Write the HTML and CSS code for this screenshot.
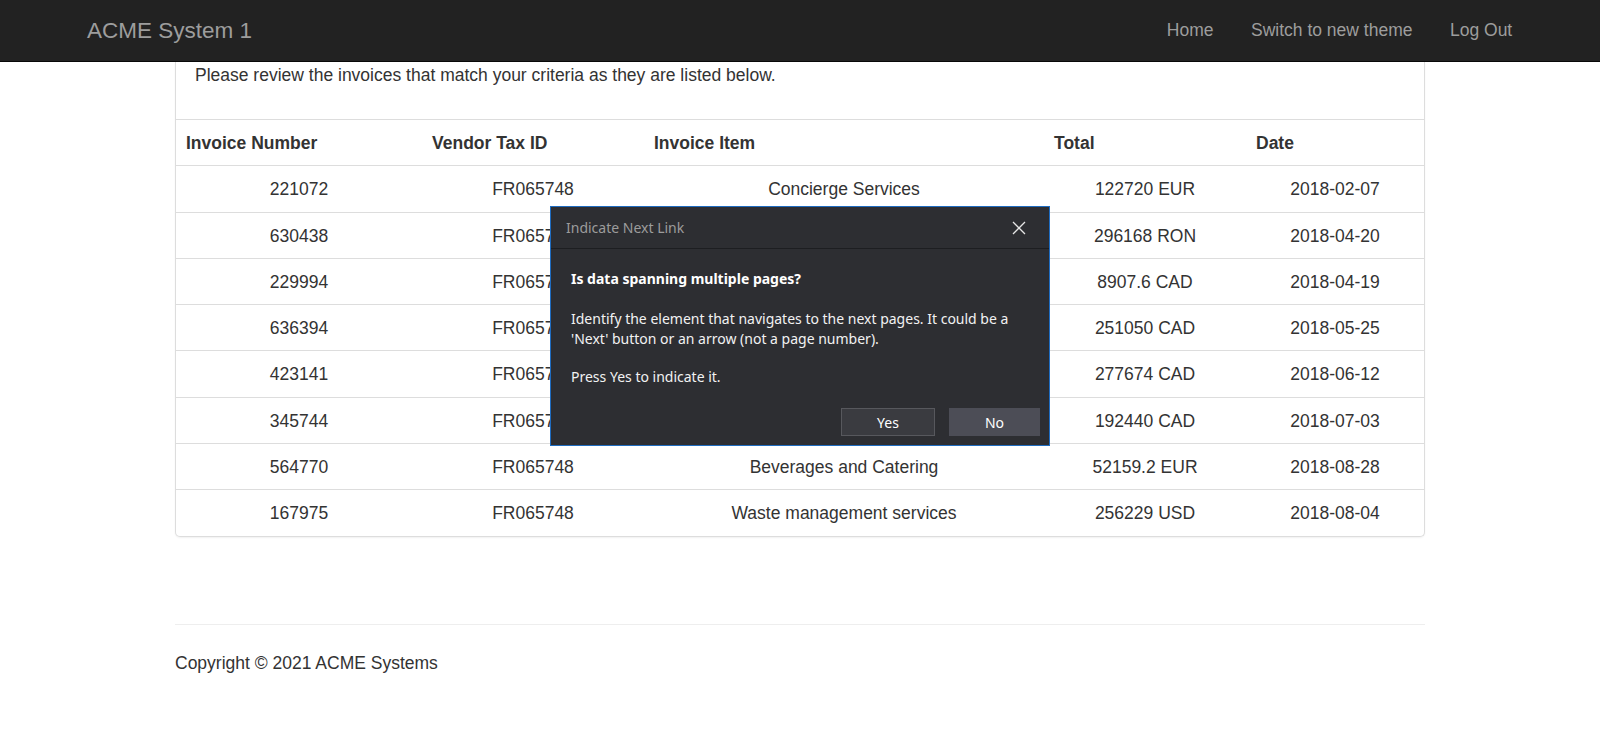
FILE: index.html
```html
<!DOCTYPE html>
<html lang="en">
<head>
<meta charset="utf-8">
<title>ACME System 1</title>
<link rel="stylesheet" href="styles.css">
</head>
<body>
<nav class="navbar">
  <div class="navbar-inner">
    <a class="brand" href="#">ACME System 1</a>
    <ul class="nav">
      <li><a href="#">Home</a></li>
      <li><a href="#">Switch to new theme</a></li>
      <li><a href="#">Log Out</a></li>
    </ul>
  </div>
</nav>

<main class="container">
  <section class="panel">
    <div class="panel-body">
      <p>Please review the invoices that match your criteria as they are listed below.</p>
    </div>
    <table class="invoices">
      <colgroup>
        <col class="c1"><col class="c2"><col class="c3"><col class="c4"><col class="c5">
      </colgroup>
      <thead>
        <tr><th>Invoice Number</th><th>Vendor Tax ID</th><th>Invoice Item</th><th>Total</th><th>Date</th></tr>
      </thead>
      <tbody>
        <tr><td>221072</td><td>FR065748</td><td>Concierge Services</td><td>122720 EUR</td><td>2018-02-07</td></tr>
        <tr><td>630438</td><td>FR065748</td><td>Office Supplies</td><td>296168 RON</td><td>2018-04-20</td></tr>
        <tr><td>229994</td><td>FR065748</td><td>IT Consulting</td><td>8907.6 CAD</td><td>2018-04-19</td></tr>
        <tr><td>636394</td><td>FR065748</td><td>Cleaning Services</td><td>251050 CAD</td><td>2018-05-25</td></tr>
        <tr><td>423141</td><td>FR065748</td><td>Security Services</td><td>277674 CAD</td><td>2018-06-12</td></tr>
        <tr><td>345744</td><td>FR065748</td><td>Maintenance</td><td>192440 CAD</td><td>2018-07-03</td></tr>
        <tr><td>564770</td><td>FR065748</td><td>Beverages and Catering</td><td>52159.2 EUR</td><td>2018-08-28</td></tr>
        <tr><td>167975</td><td>FR065748</td><td>Waste management services</td><td>256229 USD</td><td>2018-08-04</td></tr>
      </tbody>
    </table>
  </section>

  <footer class="footer">
    <hr>
    <p>Copyright © 2021 ACME Systems</p>
  </footer>
</main>

<div class="dialog" role="dialog" aria-labelledby="dlg-title">
  <div class="dialog-title">
    <span id="dlg-title">Indicate Next Link</span>
    <button class="dialog-close" aria-label="Close">
      <svg width="14" height="14" viewBox="0 0 14 14"><path d="M1 1 L13 13 M13 1 L1 13" stroke="#e6e6e6" stroke-width="1.3" fill="none"/></svg>
    </button>
  </div>
  <div class="dialog-body">
    <p class="q">Is data spanning multiple pages?</p>
    <p>Identify the element that navigates to the next pages. It could be a 'Next' button or an arrow (not a page number).</p>
    <p>Press Yes to indicate it.</p>
    <div class="dialog-actions">
      <button class="btn btn-yes">Yes</button>
      <button class="btn btn-no">No</button>
    </div>
  </div>
</div>
</body>
</html>
```

FILE: styles.css
```css
* { box-sizing: border-box; }

html, body { height: 100%; }

body {
  margin: 0;
  font-family: "Liberation Sans", Arial, Helvetica, sans-serif;
  font-size: 17.5px;
  line-height: 25px;
  color: #333;
  background: #fff;
  position: relative;
}

a { text-decoration: none; }

/* navbar */
.navbar {
  height: 62px;
  background: #222;
  border-bottom: 1px solid #080808;
}
.navbar-inner {
  height: 61px;
  padding: 0 69px 0 68px;
  display: flex;
  align-items: center;
  justify-content: space-between;
}
.brand {
  padding: 0 19px;
  font-size: 22.5px;
  line-height: 25px;
  color: #9d9d9d;
}
.nav {
  display: flex;
  margin: 0;
  padding: 0;
  list-style: none;
}
.nav a {
  display: block;
  padding: 0 18.75px;
  color: #9d9d9d;
  line-height: 25px;
}

/* content */
.container {
  width: 1250px;
  margin: 0 auto;
}
.panel {
  border: 1px solid #ddd;
  border-top: 0;
  border-radius: 0 0 5px 5px;
  box-shadow: 0 1px 2px rgba(0,0,0,.06);
  background: #fff;
}
.panel-body {
  padding: 1px 19px 18.5px;
}
.panel-body p {
  margin: 0 0 12.5px;
}

.invoices {
  width: 100%;
  border-collapse: collapse;
  table-layout: fixed;
  border-top: 1px solid #ddd;
}
.c1 { width: 246px; }
.c2 { width: 222px; }
.c3 { width: 400px; }
.c4 { width: 202px; }
.c5 { width: 178px; }

.invoices th {
  text-align: left;
  font-weight: bold;
  padding: 11px 10px 9.3px;
  border-bottom: 1px solid #ddd;
}
.invoices td {
  text-align: center;
  padding: 11px 10px 9.3px;
  border-bottom: 1px solid #ddd;
}
.invoices tbody tr:last-child td { border-bottom: 0; }

.footer hr {
  margin: 87px 0 25px;
  border: 0;
  border-top: 1px solid #eee;
}
.footer p { margin: 0; padding-top: 1px; }

/* dialog overlay */
.dialog {
  position: absolute;
  left: 550px;
  top: 206px;
  width: 500px;
  height: 240px;
  background: #2d2e32;
  border: 1px solid #1f6cc0;
  font-family: "Noto Sans", "Open Sans", sans-serif;
  font-size: 14px;
  color: #f2f2f2;
}
.dialog-title {
  height: 42px;
  display: flex;
  align-items: center;
  justify-content: space-between;
  padding: 0 0 0 15px;
  border-bottom: 1px solid #1d1e21;
  color: #9c9c9c;
  font-size: 14px;
}
.dialog-close {
  width: 60px;
  height: 41px;
  border: 0;
  background: transparent;
  display: flex;
  align-items: center;
  justify-content: center;
  padding: 0;
}
.dialog-body {
  padding: 20px 9px 0 20px;
  line-height: 20px;
}
.dialog-body p { margin: 0 0 18px; }
.dialog-body p.q { margin-bottom: 20px; font-weight: bold; color: #fff; }
.dialog-actions {
  display: flex;
  justify-content: flex-end;
  gap: 14px;
  margin-top: 21px;
}
.btn {
  width: 92px;
  height: 28px;
  font-family: "Noto Sans", "Open Sans", sans-serif;
  font-size: 14px;
  color: #fff;
  padding: 0;
}
.btn-yes {
  width: 94px;
  background: #3a3b40;
  border: 1px solid #57585d;
}
.btn-no {
  width: 91px;
  background: #4c4d56;
  border: 1px solid #4c4d56;
}
```
